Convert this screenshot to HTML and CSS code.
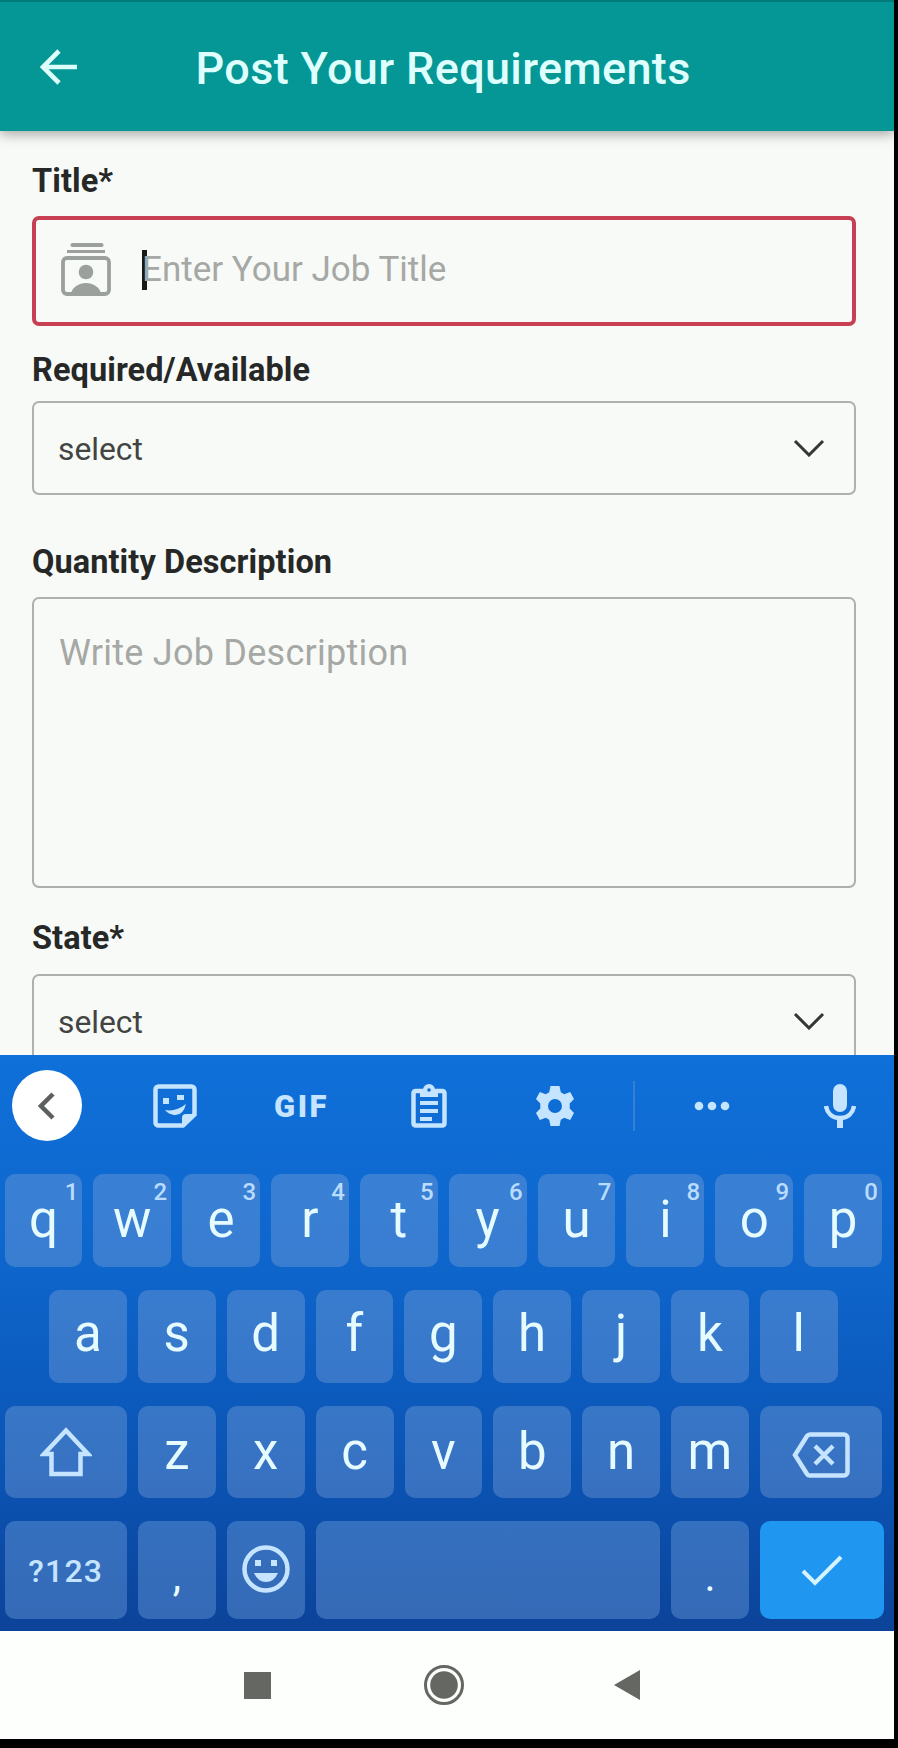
FILE: index.html
```
<!DOCTYPE html>
<html lang="en">
<head>
<meta charset="utf-8">
<title>Post Your Requirements</title>
<link rel="stylesheet" href="styles.css">
</head>
<body>
<div class="screen">
  <header class="appbar">
    <svg class="back" viewBox="0 0 40 38"><path d="M38 19H4M20 3L4 19l16 16"/></svg>
    <h1 class="appbar-title">Post Your Requirements</h1>
  </header>

  <main class="form">
    <label class="label label-title">Title*</label>
    <div class="field field-title">
      <svg class="field-icon" viewBox="0 0 50 54"><path class="fill" d="M12 1h28a1 1 0 0 1 1 4H11a1 1 0 0 1 1-4zM6 8h38v3H6z"/><rect class="line" x="2" y="16" width="46" height="36" rx="4"/><circle class="fill" cx="25" cy="30" r="7.3"/><path class="fill" d="M10 52c1-7 8-11 15-11s14 4 15 11z"/></svg>
      <span class="caret"></span>
      <span class="placeholder placeholder-title">Enter Your Job Title</span>
    </div>

    <label class="label label-avail">Required/Available</label>
    <div class="field field-select">
      <span class="value">select</span>
      <svg class="chevron" viewBox="0 0 32 18"><path d="M2 2l14 14L30 2"/></svg>
    </div>

    <label class="label label-qty">Quantity Description</label>
    <div class="field field-area"><span class="placeholder placeholder-area">Write Job Description</span></div>

    <label class="label label-state">State*</label>
    <div class="field field-select field-state">
      <span class="value">select</span>
      <svg class="chevron" viewBox="0 0 32 18"><path d="M2 2l14 14L30 2"/></svg>
    </div>
  </main>

  <section class="keyboard">
    <div class="toolbar">
      <div class="tool tool-first"><span class="collapse"><svg viewBox="0 0 18 28"><path d="M15 2L3 14l12 12"/></svg></span></div>
      <div class="tool"><svg class="sticker" viewBox="0 0 44 44"><path class="line" d="M5.500 2.500h33a3 3 0 0 1 3 3v25L30 41.500H5.500a3 3 0 0 1-3-3v-33a3 3 0 0 1 3-3z"/><path class="fill" d="M29 42v-8q0-4 4-4h9zM10 14h6v6h-6zM24 11h7v5h-7zM12 26q11 2 21-6-3 12-12 11-6-1-9-5z"/></svg></div>
      <div class="tool"><span class="gif">GIF</span></div>
      <div class="tool"><svg class="clip" viewBox="0 0 36 44"><rect class="line" x="2.500" y="7" width="31" height="34.500" rx="2"/><path class="fill" d="M9 7h5l4-7 4 7h5v6H9zM9 17h18v4H9zM9 25h18v4H9zM9 33h12v4H9z"/><path class="fill" d="M12 6a6 6 0 0 1 12 0z"/><circle class="hole" cx="18" cy="6" r="1.800"/></svg></div>
      <div class="tool"><svg class="gear" viewBox="0 0 38 40"><path class="fill" fill-rule="evenodd" d="M14.500 0h9l1.300 6.200 3.400 2 6-2.200 3.800 7-4.300 4.500v5L38 27l-3.800 7-6-2.200-3.400 2L23.500 40h-9l-1.300-6.200-3.400-2-6 2.200L0 27l4.300-4.500v-5L0 13l3.800-7 6 2.200 3.400-2zM19 13a7 7 0 1 0 0 14 7 7 0 0 0 0-14z"/></svg></div>
      <div class="tool"><span class="divider"></span></div>
      <div class="tool"><svg class="dots" viewBox="0 0 36 10"><circle cx="5" cy="5" r="4.300"/><circle cx="18" cy="5" r="4.300"/><circle cx="31" cy="5" r="4.300"/></svg></div>
      <div class="tool tool-last"><svg class="mic" viewBox="0 0 32 44"><rect class="fill" x="9" y="0" width="14" height="28" rx="7"/><path class="line" d="M2 22c1 7 6 12 14 12s13-5 14-12"/><path class="line stem" d="M16 34v10"/></svg></div>
    </div>

    <div class="row row-1">
      <span class="key">q<sup>1</sup></span><span class="key">w<sup>2</sup></span><span class="key">e<sup>3</sup></span><span class="key">r<sup>4</sup></span><span class="key">t<sup>5</sup></span><span class="key">y<sup>6</sup></span><span class="key">u<sup>7</sup></span><span class="key">i<sup>8</sup></span><span class="key">o<sup>9</sup></span><span class="key">p<sup>0</sup></span>
    </div>
    <div class="row row-2">
      <span class="key">a</span><span class="key">s</span><span class="key">d</span><span class="key">f</span><span class="key">g</span><span class="key">h</span><span class="key">j</span><span class="key">k</span><span class="key">l</span>
    </div>
    <div class="row row-3">
      <span class="key wide"><svg class="shift" viewBox="0 0 52 50"><path d="M26 3.500L48 27H40.500V47h-29V27H4z"/></svg></span><span class="key">z</span><span class="key">x</span><span class="key">c</span><span class="key">v</span><span class="key">b</span><span class="key">n</span><span class="key">m</span><span class="key wide"><svg class="delete" viewBox="0 0 58 46"><path d="M18 2.500h34a3.500 3.500 0 0 1 3.500 3.500v34a3.500 3.500 0 0 1-3.500 3.500H18q-2 0-3-1.500L3 23 15 4q1-1.500 3-1.500z"/><path d="M23 14l18 18M41 14L23 32"/></svg></span>
    </div>
    <div class="row row-4">
      <span class="key wide symbols">?123</span><span class="key punct">,</span><span class="key"><svg class="emoji" viewBox="0 0 48 48"><circle class="line" cx="24" cy="24" r="21.500"/><path class="fill" d="M13 15h6v6h-6zM29 15h6v6h-6zM12 28h24q-4 9-12 9t-12-9z"/></svg></span><span class="key space"></span><span class="key punct">.</span><span class="key wide enter"><svg class="check" viewBox="0 0 42 32"><path d="M2 17l12 12L40 3"/></svg></span>
    </div>
  </section>

  <nav class="navbar">
    <span class="nav-recent"></span>
    <svg class="nav-home" viewBox="0 0 42 42"><circle class="ring" cx="21" cy="21" r="18.500"/><circle cx="21" cy="21" r="13.800"/></svg>
    <svg class="nav-back" viewBox="0 0 27 30"><path d="M0 15L26 0v30z"/></svg>
  </nav>
</div>
</body>
</html>
```
FILE: styles.css
```
* { box-sizing: border-box; }
body { margin: 0; background: #000; font-family: Roboto, "Liberation Sans", sans-serif; }
svg { display: block; flex: none; fill: none; }

.screen { width: 894px; height: 1739px; display: flex; flex-direction: column; overflow: hidden; background: #fdfffc; }

.appbar { position: relative; z-index: 1; flex: none; height: 131px; display: flex; align-items: center; padding: 2px 0 0 39px; background: #059795; border-top: 2px solid #027c7a; box-shadow: 0 3px 12px rgba(0, 0, 0, .35); }
.back { width: 40px; height: 38px; margin-bottom: 1px; stroke: #dcfffc; stroke-width: 4.600; }
.appbar-title { margin: 2px 0 0 116.500px; font-size: 45px; font-weight: 500; line-height: 48px; letter-spacing: .35px; color: #defffd; white-space: nowrap; }

.form { flex: none; height: 924px; padding: 30px 38px 0 32px; overflow: hidden; background: #f8faf7; }
.label { display: block; height: 40px; line-height: 40px; font-size: 32.500px; font-weight: 700; letter-spacing: .08px; color: #262827; white-space: nowrap; }
.label-avail { margin-top: 24px; }
.label-qty { margin-top: 47px; }
.label-state { margin-top: 30px; }
.field { display: flex; align-items: center; border: 2px solid #adb0ad; border-radius: 7px; }
.field-title { height: 110px; margin-top: 15px; padding-left: 25px; border: 4px solid #c63f52; }
.field-select { height: 94px; margin-top: 11px; padding: 0 29px 0 24px; justify-content: space-between; }
.field-area { height: 291px; margin-top: 15px; padding: 34px 0 0 25px; align-items: flex-start; }
.field-state { margin-top: 16px; }
.field-icon { width: 50px; height: 54px; margin-bottom: 4px; }
.field-icon .fill { fill: #9ca09c; }
.field-icon .line { stroke: #9ca09c; stroke-width: 3.800; }
.caret { width: 5px; height: 40px; margin: 0 0 2px 31px; background: #181a18; }
.placeholder { font-size: 36px; line-height: 40px; letter-spacing: .25px; color: #a5a8a4; white-space: nowrap; }
.placeholder-title { margin: 0 0 3px -5px; font-size: 35px; letter-spacing: 0; }
.value { padding-top: 2px; font-size: 31.800px; line-height: 40px; color: #424442; }
.chevron { width: 32px; height: 18px; stroke: #353735; stroke-width: 3; }

.keyboard { flex: none; height: 576px; background: linear-gradient(#0f70d9, #0e66cc 35%, #0b55b6 70%, #0c4399); }
.toolbar { height: 119px; padding-bottom: 18px; display: grid; grid-template-columns: 112px 126px 127px 127px 126px 32px 124px 120px; }
.tool { display: flex; align-items: center; justify-content: center; }
.tool-first { padding-right: 18px; }
.tool-last { padding-left: 12px; }
.tool .fill, .emoji .fill { fill: #c5e4ff; }
.tool .line, .emoji .line { stroke: #c5e4ff; stroke-width: 4.500; }
.collapse { width: 70px; height: 71px; border-radius: 50%; background: #fff; display: flex; align-items: center; justify-content: center; }
.collapse svg { width: 18px; height: 28px; stroke: #5c605e; stroke-width: 4.500; }
.sticker { width: 44px; height: 44px; }
.gif { padding-top: 2px; font-size: 31px; font-weight: 900; letter-spacing: 2.500px; color: #c5e4ff; }
.clip { width: 36px; height: 44px; }
.clip .hole { fill: #0f6bd2; }
.gear { width: 38px; height: 40px; }
.divider { width: 2px; height: 50px; background: #3480d8; }
.dots { width: 36px; height: 10px; fill: #c5e4ff; }
.mic { width: 32px; height: 44px; }
.mic .stem { stroke-width: 6; }

.row { display: flex; gap: 11px; height: 93px; margin: 0 0 23px 4.500px; }
.row-2 { margin-left: 49px; }
.row-3 { height: 92px; }
.row-4 { height: 98px; margin-bottom: 0; }
.key { position: relative; flex: none; width: 77.850px; display: flex; align-items: center; justify-content: center; border-radius: 10px; background: rgba(135, 168, 220, .36); font-size: 51px; line-height: 58px; color: #e6fbff; }
.row-1 .key, .row-3 .key { padding-bottom: 1px; }
.row-2 .key { padding-bottom: 5px; }
.row-4 .key { background: rgba(122, 168, 226, .38); }
.key sup { position: absolute; top: 5px; right: 4px; font-size: 24px; line-height: 26px; color: #b9dcff; font-weight: 500; }
.wide { width: 122.500px; }
.space { width: 344.400px; }
.row-4 .symbols { padding-top: 1px; font-size: 32px; font-weight: 500; letter-spacing: 1.200px; color: #c5e4ff; }
.row-4 .punct { font-size: 42px; padding-top: 14px; }
.row-4 .enter { width: 124px; background: #1f96f0; }
.shift { width: 52px; height: 50px; stroke: #c5e4ff; stroke-width: 4.500; }
.delete { width: 58px; height: 46px; margin-top: 6px; stroke: #c5e4ff; stroke-width: 4.500; }
.emoji { width: 48px; height: 48px; margin-bottom: 2px; }
.check { width: 42px; height: 32px; margin-bottom: 1px; stroke: #d4f3ff; stroke-width: 4; }

.navbar { flex: none; height: 108px; display: flex; align-items: center; padding-left: 244px; }
.nav-recent { width: 27px; height: 27px; background: #656762; }
.nav-home { width: 42px; height: 42px; margin-left: 152px; fill: #656762; }
.nav-home .ring { fill: none; stroke: #656762; stroke-width: 3; }
.nav-back { width: 27px; height: 30px; margin-left: 149px; fill: #656762; }
```
